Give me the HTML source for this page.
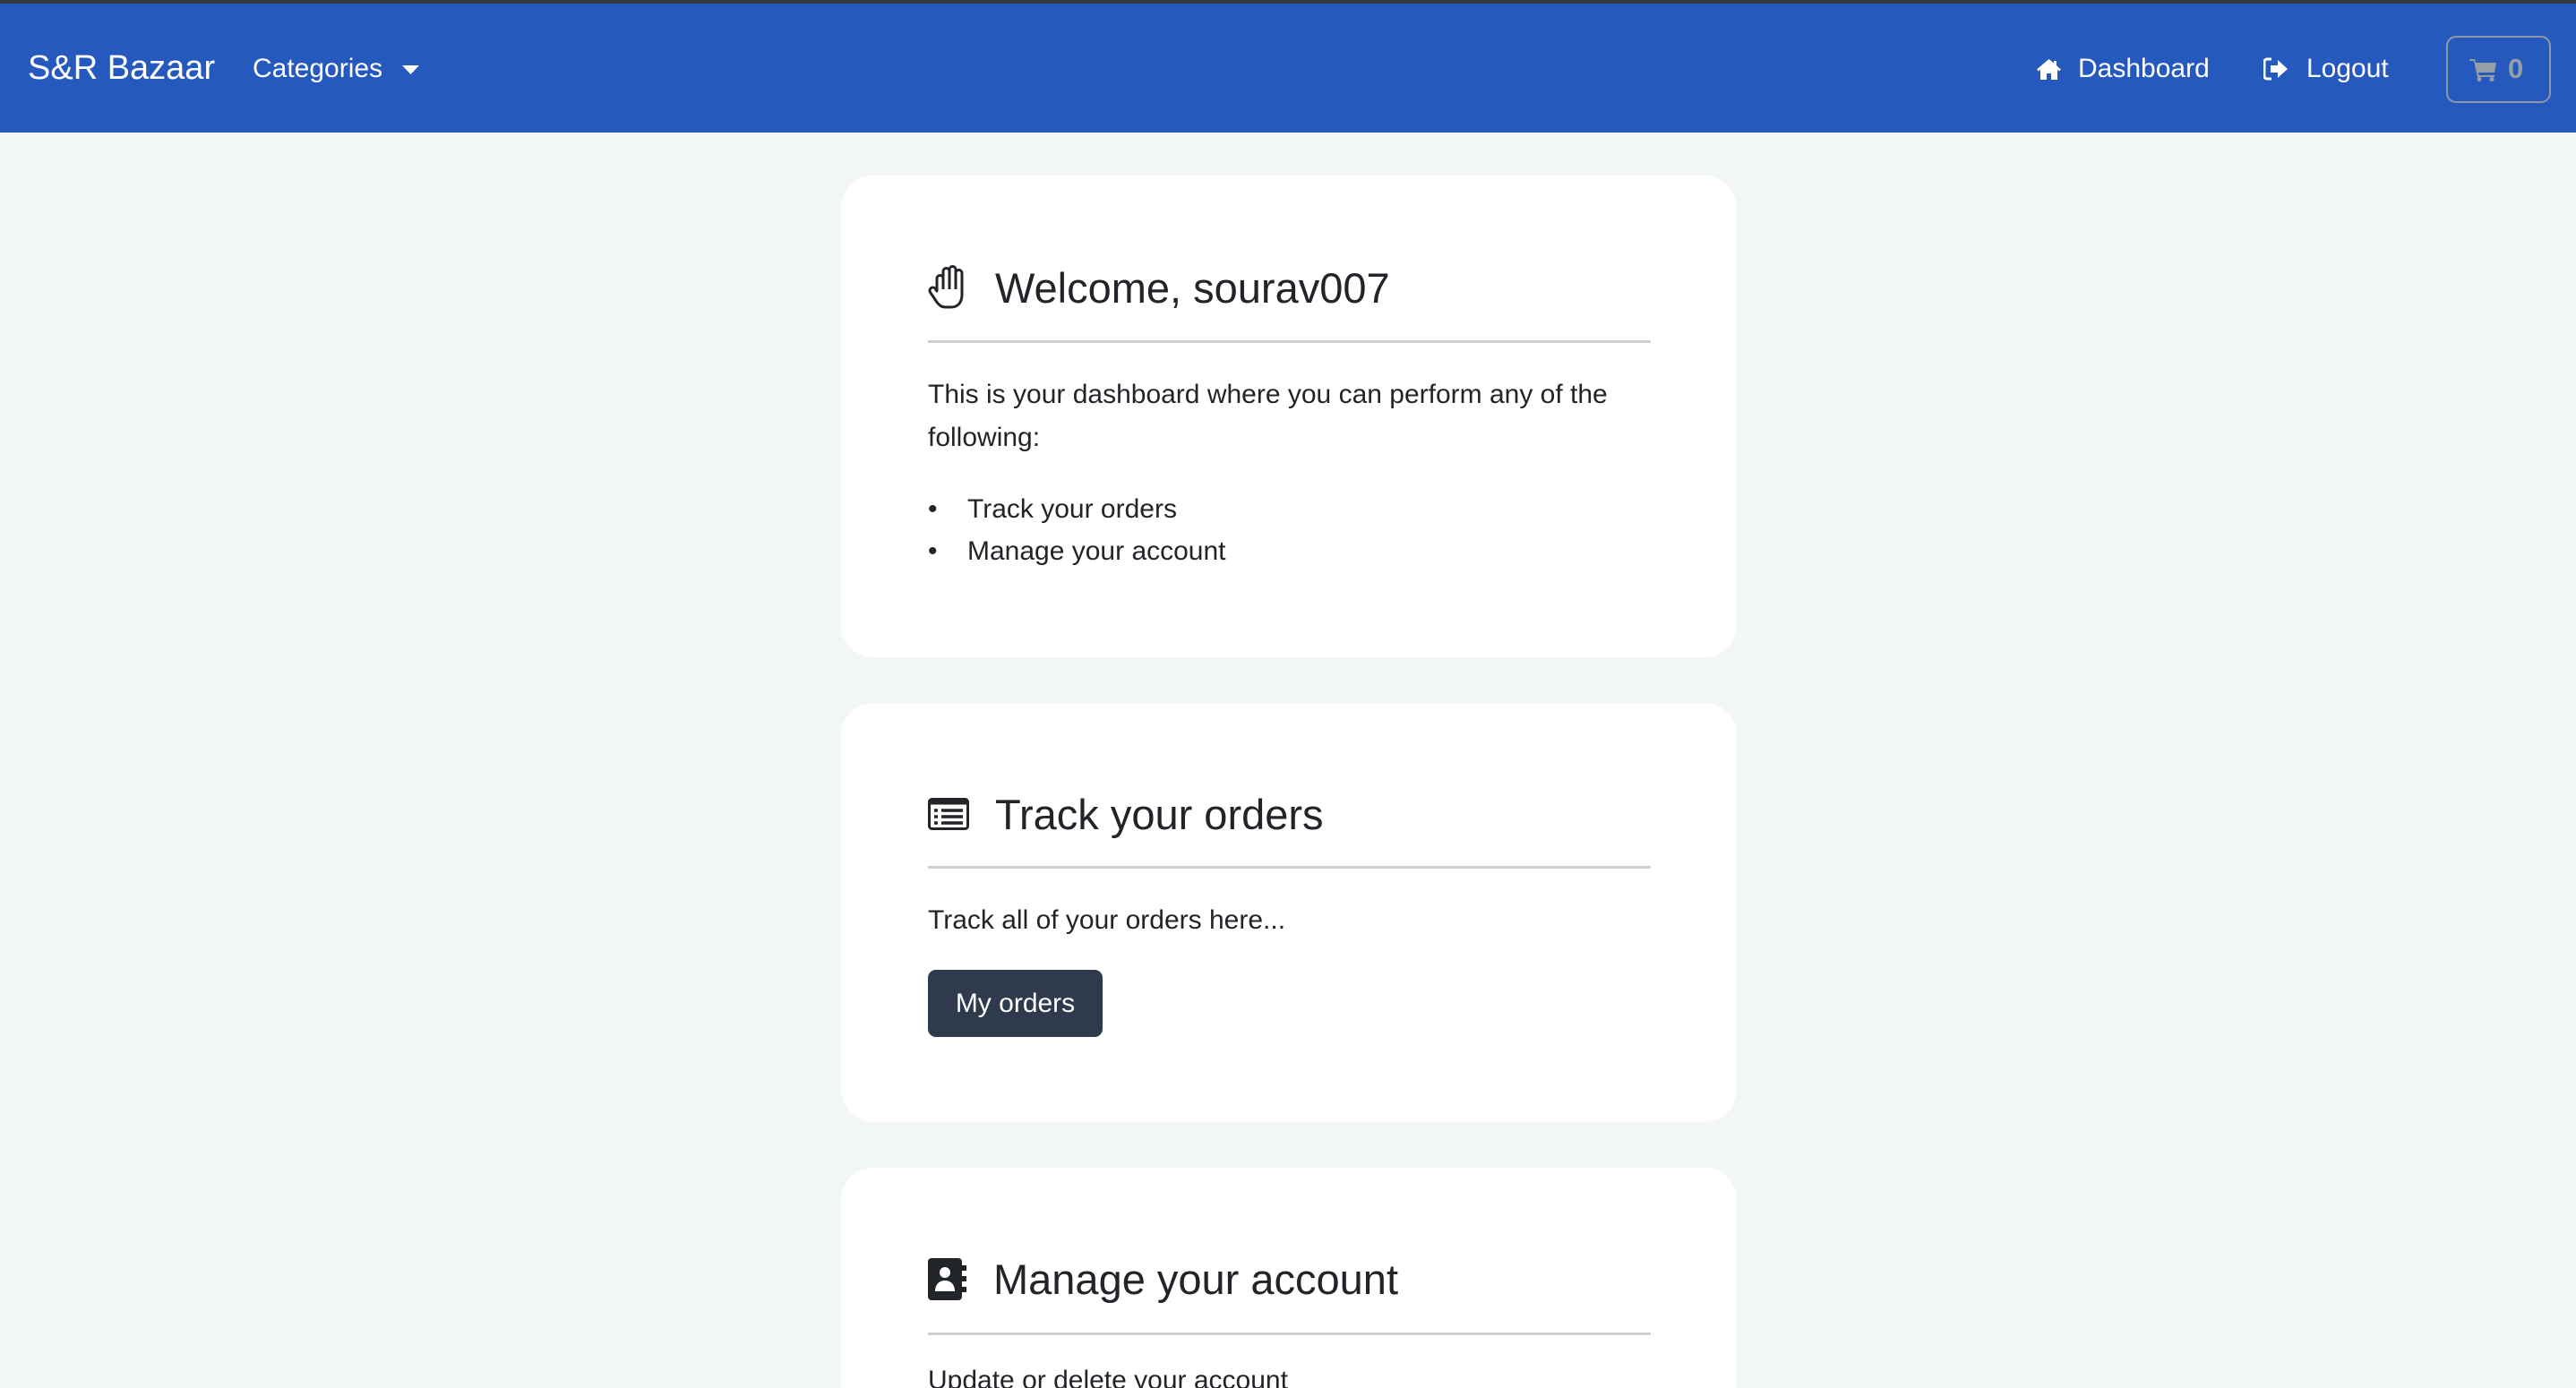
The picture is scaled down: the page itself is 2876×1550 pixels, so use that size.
<!DOCTYPE html>
<html style="width:2876px;height:1550px;overflow:hidden"><head><meta charset="utf-8"><style>
*{margin:0;padding:0;box-sizing:border-box}
body{width:2876px;height:1550px;overflow:hidden;background:#f3f6f7;font-family:"Liberation Sans",sans-serif;color:#212529;position:relative}
.a{position:absolute;white-space:nowrap}
.nav{position:absolute;left:0;top:0;width:2876px;height:148px;background:#2659be;border-top:4px solid #343a3e}
.nav .a{color:#fff}
.card{position:absolute;left:939px;width:1000px;background:#fff;border-radius:36px}
.hr{position:absolute;left:1036px;width:807px;height:3px;background:#cfcfcf}
.h{font-size:47px;line-height:1}
.p{font-size:30px;line-height:1}
</style></head><body>
<div class="nav">
<div class="a" style="left:31px;top:53px;font-size:38px;line-height:1">S&amp;R Bazaar</div>
<div class="a" style="left:282px;top:58px;font-size:30px;line-height:1">Categories</div>
<svg class="a" style="left:449px;top:69px" width="19" height="10"><path d="M0 0H19L9.5 10Z" fill="#fff"/></svg>
<svg class="a" style="left:2274px;top:61px" width="27" height="24" viewBox="0 0 27 24"><path d="M13.5 1L0 12.5l2 2 2-1.7V24h7v-7h5v7h7V12.8l2 1.7 2-2-5-4.3V3h-3v2.6z" fill="#fff"/></svg>
<div class="a" style="left:2320px;top:58px;font-size:30px;line-height:1">Dashboard</div>
<svg class="a" style="left:2527px;top:60px" width="28" height="26" viewBox="0 0 28 26"><path d="M9 2H4a3 3 0 0 0-3 3v16a3 3 0 0 0 3 3h5" stroke="#fff" stroke-width="3" fill="none"/><path d="M8 9h8V3l11 10-11 10v-6H8z" fill="#fff"/></svg>
<div class="a" style="left:2575px;top:58px;font-size:30px;line-height:1">Logout</div>
<div class="a" style="left:2731px;top:36px;width:117px;height:75px;border:2px solid #8e9aa6;border-radius:11px"></div>
<svg class="a" style="left:2757px;top:61px" width="30" height="26" viewBox="0 0 30 26"><path d="M0 1h6l1 4h23l-2 11H10l.6 3H28v2H9L5 3H0z" fill="#95a0a5"/><circle cx="11" cy="23.5" r="2.5" fill="#95a0a5"/><circle cx="25" cy="23.5" r="2.5" fill="#95a0a5"/></svg>
<div class="a" style="left:2800px;top:57px;font-size:31px;font-weight:bold;color:#95a0a5;line-height:1">0</div>
</div>

<div class="card" style="top:196px;height:538px"></div>
<svg class="a" style="left:1036px;top:295px" width="44" height="52" viewBox="0 0 44 52"><path d="M10 30V16a3.5 3.5 0 0 1 7 0V8a3.5 3.5 0 0 1 7 0V6a3.5 3.5 0 0 1 7 0v4a3.5 3.5 0 0 1 7 0v24c0 8-4 14-12 14h-6c-6 0-8-3-11-7L3 32a3.5 3.5 0 0 1 5-5z M17 16v12 M24 8v20 M31 6v22" stroke="#212529" stroke-width="3" fill="none" stroke-linejoin="round"/></svg>
<div class="a h" style="left:1111px;top:298px">Welcome, sourav007</div>
<div class="hr" style="top:380px"></div>
<div class="a p" style="left:1036px;top:417px;line-height:48px">This is your dashboard where you can perform any of the<br>following:</div>
<div class="a p" style="left:1036px;top:545px;line-height:47px">•<br>•</div>
<div class="a p" style="left:1080px;top:545px;line-height:47px">Track your orders<br>Manage your account</div>

<div class="card" style="top:785px;height:468px"></div>
<svg class="a" style="left:1036px;top:891px" width="46" height="36" viewBox="0 0 46 36"><rect x="1.5" y="1.5" width="43" height="33" rx="3" fill="none" stroke="#212529" stroke-width="3"/><rect x="1.5" y="1.5" width="43" height="6" fill="#212529"/><path d="M7 14h4M15 14h24M7 21h4M15 21h24M7 28h4M15 28h24" stroke="#212529" stroke-width="3.5"/></svg>
<div class="a h" style="left:1111px;top:886px">Track your orders</div>
<div class="hr" style="top:967px"></div>
<div class="a p" style="left:1036px;top:1013px">Track all of your orders here...</div>
<div class="a" style="left:1036px;top:1083px;width:195px;height:75px;background:#2f3b4d;border-radius:9px;color:#fff;font-size:30px;line-height:75px;text-align:center">My orders</div>

<div class="card" style="top:1304px;height:246px;border-radius:36px 36px 0 0"></div>
<svg class="a" style="left:1036px;top:1405px" width="44" height="47" viewBox="0 0 44 47"><rect x="0" y="0" width="38" height="47" rx="4" fill="#212529"/><rect x="38" y="8" width="5" height="6" fill="#212529"/><rect x="38" y="20" width="5" height="6" fill="#212529"/><rect x="38" y="32" width="5" height="6" fill="#212529"/><circle cx="19" cy="16" r="6" fill="#fff"/><path d="M8 37c0-8 5-12 11-12s11 4 11 12z" fill="#fff"/></svg>
<div class="a h" style="left:1109px;top:1405px">Manage your account</div>
<div class="hr" style="top:1488px"></div>
<div class="a p" style="left:1036px;top:1527px">Update or delete your account</div>
</body></html>
